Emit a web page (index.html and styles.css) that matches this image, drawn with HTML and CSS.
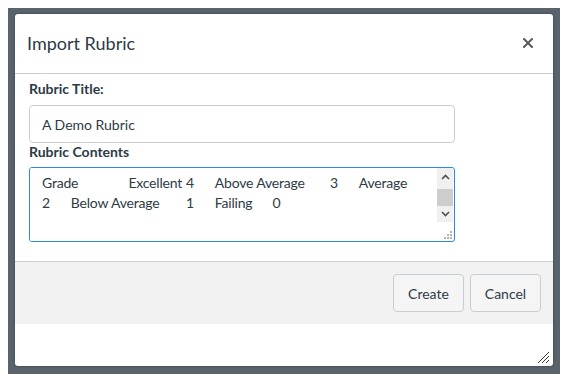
FILE: index.html
```html
<!DOCTYPE html>
<html>
<head>
<meta charset="utf-8">
<link rel="stylesheet" href="styles.css">
</head>
<body>
<div class="backdrop">
  <div class="dialog">
    <div class="dlg-header">
      <h1 class="dlg-title">Import Rubric</h1>
      <button class="close" aria-label="Close">
        <svg width="10" height="10" viewBox="0 0 10 10"><path d="M1 1 L9 9 M9 1 L1 9" stroke="#5b5b5b" stroke-width="2" stroke-linecap="square"/></svg>
      </button>
    </div>
    <div class="dlg-body">
      <label class="field-label">Rubric Title:</label>
      <input class="text-input" type="text" value="A Demo Rubric">
      <label class="field-label">Rubric Contents</label>
      <div class="ta-box">
        <textarea class="ta-input">Grade		Excellent	4	Above Average	3	Average
2	Below Average	1	Failing	0</textarea>
        <div class="sb">
          <div class="sb-btn sb-up"><svg width="9" height="6" viewBox="0 0 9 6"><path d="M1 5 L4.5 1.5 L8 5" fill="none" stroke="#505050" stroke-width="1.6"/></svg></div>
          <div class="sb-thumb"></div>
          <div class="sb-btn sb-down"><svg width="9" height="6" viewBox="0 0 9 6"><path d="M1 1 L4.5 4.5 L8 1" fill="none" stroke="#505050" stroke-width="1.6"/></svg></div>
          <div class="sb-corner"><svg width="10" height="9" viewBox="0 0 10 9"><rect x="7" y="0" width="2" height="2" fill="#b4b4b4"/><rect x="4" y="3" width="2" height="2" fill="#b4b4b4"/><rect x="7" y="3" width="2" height="2" fill="#b4b4b4"/><rect x="1" y="6" width="2" height="2" fill="#b4b4b4"/><rect x="4" y="6" width="2" height="2" fill="#b4b4b4"/><rect x="7" y="6" width="2" height="2" fill="#b4b4b4"/></svg></div>
        </div>
      </div>
    </div>
    <div class="dlg-footer">
      <button class="btn">Create</button>
      <button class="btn">Cancel</button>
    </div>
    <div class="dlg-rest">
      <svg class="grip" width="13" height="13" viewBox="0 0 13 13"><path d="M1 12 L12 1 M5 12 L12 5 M9 12 L12 9" stroke="#3a3a3a" stroke-width="1"/></svg>
    </div>
  </div>
</div>
</body>
</html>
```
FILE: styles.css
```css
* { box-sizing: border-box; }
html, body { background: #fff; }
body {
  margin: 8px;
  font-family: Lato, "Liberation Sans", sans-serif;
  color: #2d3b45;
}
.backdrop {
  background: #59636c;
  height: 366px;
  padding: 6px 7px 8px 7px;
}
.dialog {
  background: #fff;
  height: 352px;
  border-radius: 3px;
  display: flex;
  flex-direction: column;
  box-shadow: 0 0 3px rgba(0,0,0,0.35);
  overflow: hidden;
}
.dlg-header {
  height: 60px;
  flex: none;
  border-bottom: 1px solid #cccccc;
  display: flex;
  align-items: center;
  justify-content: space-between;
  padding: 0 20px 1px 12px;
}
.dlg-title {
  margin: 0;
  font-size: 18px;
  font-weight: 400;
  color: #2d3b45;
}
.close {
  border: 0;
  background: none;
  padding: 0;
  width: 10px;
  height: 10px;
  display: flex;
}
.dlg-body {
  flex: none;
  padding: 6px 14px 19px;
  display: flex;
  flex-direction: column;
  align-items: flex-start;
}
.field-label {
  display: block;
  font-size: 14px;
  font-weight: 700;
  line-height: 18px;
  height: 18px;
  margin-bottom: 7px;
}
.field-label + .ta-box { margin-top: -1px; }
.text-input {
  width: 426px;
  height: 38px;
  border: 1px solid #c7cdd1;
  border-radius: 4px;
  padding: 0 12px;
  font-family: Lato, "Liberation Sans", sans-serif;
  font-size: 14px;
  color: #2d3b45;
  outline: none;
  margin: 0;
}
.ta-box {
  width: 426px;
  height: 75px;
  border: 1px solid #2b8ad6;
  border-radius: 3px;
  display: flex;
  overflow: hidden;
}
.ta-input {
  flex: 1;
  border: 0;
  outline: none;
  resize: none;
  overflow: hidden;
  margin: 0;
  padding: 5px 0 0 12px;
  font-family: Lato, "Liberation Sans", sans-serif;
  font-size: 14px;
  line-height: 20px;
  letter-spacing: -0.2px;
  color: #2d3b45;
  tab-size: 28.8px;
  -moz-tab-size: 28.8px;
  white-space: pre-wrap;
}
.sb {
  width: 16px;
  flex: none;
  display: flex;
  flex-direction: column;
  margin-right: 1px;
}
.sb-btn {
  background: #f0f0f0;
  display: flex;
  justify-content: center;
}
.sb-up { height: 21px; align-items: flex-start; padding-top: 6px; }
.sb-down { height: 16px; align-items: flex-start; padding-top: 5px; }
.sb-thumb { height: 17px; background: #cdcdcd; }
.sb-corner {
  flex: 1;
  display: flex;
  align-items: flex-end;
  justify-content: flex-end;
  padding: 0 0 1px 0;
}
.dlg-footer {
  flex: none;
  border-top: 1px solid #cccccc;
  background: #f2f2f2;
  padding: 12px;
  display: flex;
  justify-content: flex-end;
  gap: 6px;
}
.btn {
  width: 71px;
  height: 38px;
  border: 1px solid #c7cdd1;
  border-radius: 4px;
  background: #f5f5f5;
  font-family: Lato, "Liberation Sans", sans-serif;
  font-size: 14px;
  color: #2d3b45;
  padding: 0;
}
.dlg-rest {
  flex: 1;
  position: relative;
}
.grip {
  position: absolute;
  right: 3px;
  bottom: 2px;
}
```
